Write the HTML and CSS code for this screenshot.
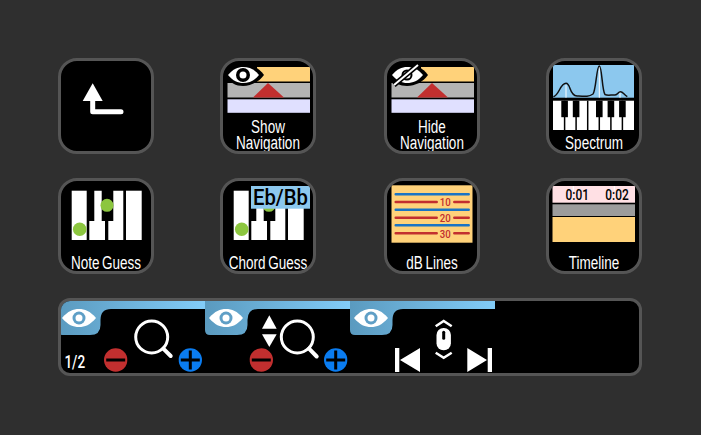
FILE: index.html
```html
<!DOCTYPE html>
<html lang="en">
  <head>
    <meta charset="UTF-8" />
    <meta name="viewport" content="width=device-width, initial-scale=1.0" />
    <title>Display Options</title>
    <link rel="stylesheet" href="styles.css">
  </head>
  <body>
    <svg class="defs" width="0" height="0">
      <defs>
        <linearGradient id="tab-fill" gradientUnits="userSpaceOnUse" x1="0" y1="0" x2="145" y2="0">
          <stop offset="0" stop-color="#5a9abf" />
          <stop offset="1" stop-color="#82ccf8" />
        </linearGradient>
        <symbol id="tab" viewBox="0 0 147 72" width="147" height="72">
          <path class="tab-fill" d="M0 0H147V8H53Q42.500 8 42.500 19V24Q42.500 34 32 34H5Q0 34 0 29Z" />
          <path class="white" d="M4 17C10 10 15 8 21 8C27 8 32 10 38 17C32 24 27 26 21 26C15 26 10 24 4 17Z" />
          <circle class="tab-ring" cx="21" cy="17" r="6.500" />
          <circle class="white" cx="21" cy="17" r="3.500" />
        </symbol>
        <symbol id="minus" viewBox="0 0 24 24" width="24" height="24">
          <circle class="red" cx="12" cy="12" r="11.700" />
          <rect class="black" x="2.500" y="10.500" width="19" height="3" />
        </symbol>
        <symbol id="plus" viewBox="0 0 24 24" width="24" height="24">
          <circle class="blue" cx="12" cy="12" r="11.700" />
          <rect class="black" x="2.500" y="10.500" width="19" height="3" />
          <rect class="black" x="10.500" y="2.500" width="3" height="19" />
        </symbol>
        <symbol id="nav-bands" viewBox="0 0 90 56" width="90" height="56">
          <rect class="yellow" x="34" y="6" width="53" height="14.500" />
          <rect class="gray" x="4.500" y="22" width="82.500" height="14.500" />
          <rect class="lilac" x="4.500" y="38.300" width="82.500" height="13.500" />
          <path class="red" d="M45 22L30 36.500H61Z" />
        </symbol>
        <symbol id="blob" viewBox="0 0 90 30" width="90" height="30">
          <path class="black" d="M1 14C7 6 13 3 20 3C28 3 36 7 41 14C36 21 28 25 20 25C13 25 7 22 1 14Z" />
        </symbol>
        <symbol id="keys" viewBox="0 0 90 64" width="90" height="64">
          <rect class="white" x="10.700" y="9.700" width="15" height="49.300" />
          <path class="white" d="M33.300 9.700H40.700V40H44V59H28.300V40H33.300Z" />
          <path class="white" d="M52.300 9.700H62.300V59H47.300V40H52.300Z" />
          <rect class="white" x="65" y="9.700" width="15.700" height="49.300" />
        </symbol>
      </defs>
    </svg>

    <main class="grid">
      <button class="btn">
        <svg width="90" height="90" viewBox="0 0 90 90">
          <path class="white" d="M31.700 22.300L41.700 40H21.700Z" />
          <path class="line-white" d="M31.700 36V50.700H60" />
        </svg>
      </button>

      <button class="btn">
        <svg width="90" height="56" viewBox="0 0 90 56">
          <use href="#nav-bands" />
          <use href="#blob" />
          <path class="white" d="M5 14C10 8 15 6 20 6C26 6 31 8 36 14C31 20 26 22 20 22C15 22 10 20 5 14Z" />
          <circle class="black" cx="20" cy="14" r="7" />
          <circle class="white" cx="20" cy="14" r="3.500" />
        </svg>
        <span class="label">Show<br />Navigation</span>
      </button>

      <button class="btn">
        <svg width="90" height="56" viewBox="0 0 90 56">
          <use href="#nav-bands" />
          <use href="#blob" />
          <path class="white" d="M5 14C10 8 15 6 20 6C26 6 31 8 36 14C31 20 26 22 20 22C15 22 10 20 5 14Z" />
          <circle class="line-pupil" cx="20" cy="14" r="4.500" />
          <path class="line-black" d="M7 24L31 4" />
          <path class="line-white-thin" d="M7 24L31 4" />
        </svg>
        <span class="label">Hide<br />Navigation</span>
      </button>

      <button class="btn">
        <svg width="90" height="74" viewBox="0 0 90 74">
          <rect class="sky" x="4" y="4" width="81" height="32.700" />
          <path class="line-thin-white" d="M17 24V36.700M50.300 6V36.700M71 31V36.700" />
          <path class="line-curve" d="M4.300 35.700C10 35 11 22.300 17 22.300C22 22.300 20 34.500 28 35C36 35.500 40 36 44 33C47 30 47.500 5 50.300 5C53 5 53 30 56 33.500C59 35 63 33.500 66 34C69 33.500 69 30.700 71.500 30.700C74 30.700 75 34 78.300 35.700" />
          <rect class="white" x="4" y="39.700" width="81" height="29.300" />
          <path class="line-key" d="M15.600 39.700V69M27.100 39.700V69M38.700 39.700V69M50.300 39.700V69M61.900 39.700V69M73.400 39.700V69" />
          <rect class="black" x="12.300" y="39.700" width="6.600" height="16.500" />
          <rect class="black" x="23.800" y="39.700" width="6.600" height="16.500" />
          <rect class="black" x="47" y="39.700" width="6.600" height="16.500" />
          <rect class="black" x="58.600" y="39.700" width="6.600" height="16.500" />
          <rect class="black" x="70.100" y="39.700" width="6.600" height="16.500" />
        </svg>
        <span class="label">Spectrum</span>
      </button>

      <button class="btn">
        <svg width="90" height="64" viewBox="0 0 90 64">
          <use href="#keys" />
          <circle class="green" cx="18.700" cy="48.300" r="6.800" />
          <circle class="green" cx="46" cy="24.300" r="6.500" />
        </svg>
        <span class="label">Note Guess</span>
      </button>

      <button class="btn">
        <svg width="90" height="64" viewBox="0 0 90 64">
          <use href="#keys" />
          <circle class="green" cx="18.700" cy="48.300" r="6.800" />
          <circle class="green" cx="46" cy="24.300" r="6.500" />
          <rect class="sky" x="28" y="5" width="59" height="22.700" />
          <text class="chord" x="57.500" y="24" textLength="55" lengthAdjust="spacingAndGlyphs">Eb/Bb</text>
        </svg>
        <span class="label">Chord Guess</span>
      </button>

      <button class="btn">
        <svg width="90" height="64" viewBox="0 0 90 64">
          <rect class="yellow" x="4.500" y="4.300" width="81" height="57.400" />
          <path class="line-blue" d="M8.700 13.300H81.700M8.700 28.700H81.700M8.700 44.300H81.700" />
          <path class="line-red" d="M8.700 21H49.700M67.300 21H81.700M8.700 36.700H49.700M67.300 36.700H81.700M8.700 52.300H49.700M67.300 52.300H81.700" />
          <text class="db" x="58.300" y="25" textLength="11" lengthAdjust="spacingAndGlyphs">10</text>
          <text class="db" x="58.300" y="40.700" textLength="11" lengthAdjust="spacingAndGlyphs">20</text>
          <text class="db" x="58.300" y="56.700" textLength="11" lengthAdjust="spacingAndGlyphs">30</text>
        </svg>
        <span class="label">dB Lines</span>
      </button>

      <button class="btn">
        <svg width="90" height="64" viewBox="0 0 90 64">
          <rect class="pink" x="3.500" y="5" width="82.500" height="16.700" />
          <rect class="gray-dark" x="3.500" y="23.300" width="82.500" height="11.700" />
          <rect class="yellow" x="3.500" y="36" width="82.500" height="25" />
          <path class="line-thin-white" d="M24.300 5V10M65.300 5V10" />
          <text class="time" x="28.300" y="18.500" textLength="23.500" lengthAdjust="spacingAndGlyphs">0:01</text>
          <text class="time" x="68" y="18.500" textLength="23.500" lengthAdjust="spacingAndGlyphs">0:02</text>
        </svg>
        <span class="label">Timeline</span>
      </button>
    </main>

    <section class="panel">
      <div class="page">
        <svg width="144" height="72" viewBox="3 0 144 72">
          <use href="#tab" />
          <circle class="line-ring" cx="93.700" cy="36" r="16" />
          <path class="line-handle" d="M105.300 47.700L112.700 55" />
          <use href="#minus" x="45.700" y="47" />
          <use href="#plus" x="120.300" y="47" />
        </svg>
        <span class="page-no">1/2</span>
      </div>
      <svg width="145" height="72" viewBox="0 0 145 72">
        <use href="#tab" />
        <path class="white" d="M64.300 14.300L71.700 27.700H57Z" />
        <path class="white" d="M57 33.300H71.700L64.300 46Z" />
        <circle class="line-ring" cx="92.300" cy="36" r="16" />
        <path class="line-handle" d="M104 47.700L111.700 55.500" />
        <use href="#minus" x="44.300" y="47" />
        <use href="#plus" x="118.700" y="47" />
      </svg>
      <svg width="145" height="72" viewBox="0 0 145 72">
        <use href="#tab" />
        <path class="white" d="M45 47H49.300V71H45ZM50 59L70 47V71Z" />
        <path class="white" d="M137.700 47H142V71H137.700ZM137 59L117.300 47V71Z" />
        <path class="line-chevron" d="M85.700 25.300L93.700 20L101.700 25.300M85.700 51.700L93.700 56.700L101.700 51.700" />
        <rect class="white" x="86.500" y="27" width="14.400" height="22.300" rx="7" />
        <rect class="black" x="92.200" y="29.800" width="3" height="9" rx="1.500" />
      </svg>
    </section>
  </body>
</html>
```

FILE: styles.css
```css
:root {
  --background-color: #2f2f2f;
  --border-color: #555555;
}

* {
  margin: 0;
  padding: 0;
  box-sizing: border-box;
}

body {
  width: 701px;
  height: 435px;
  padding: 58px 59px 59px 58px;
  background-color: var(--background-color);
  font-family: "Roboto", "Liberation Sans", sans-serif;
  overflow: hidden;
}

.defs {
  position: absolute;
}

.grid {
  display: grid;
  grid-template-columns: 162px 164px 162px 96px;
  row-gap: 24px;
  margin-bottom: 24px;
}

.btn {
  display: flex;
  flex-direction: column;
  width: 96px;
  height: 96px;
  background-color: #000;
  border: 3px solid var(--border-color);
  border-radius: 19px;
  overflow: hidden;
}

.btn svg {
  display: block;
  flex: none;
}

.label {
  display: block;
  width: 120px;
  margin: auto -15px 0;
  color: #fff;
  font-size: 18px;
  font-weight: 500;
  line-height: 16px;
  text-align: center;
  white-space: nowrap;
  word-spacing: -1.500px;
  transform: scaleX(0.75);
}

.panel {
  display: grid;
  grid-template-columns: 144px 145px 145px 1fr;
  width: 584px;
  height: 78px;
  background-color: #000;
  border: 3px solid var(--border-color);
  border-radius: 12px;
  overflow: hidden;
}

.panel svg {
  display: block;
}

.page {
  position: relative;
}

.page-no {
  position: absolute;
  left: 0;
  top: 52px;
  color: #fff;
  font-size: 18px;
  font-weight: 500;
  line-height: 18px;
  transform: scaleX(0.75);
}

/* svg fills */
.white { fill: #fff; }
.black { fill: #000; }
.red { fill: #c22f2f; }
.blue { fill: #0a7cf0; }
.green { fill: #8cc63f; }
.yellow { fill: #ffd27a; }
.gray { fill: #b4b4b4; }
.gray-dark { fill: #9c9c9c; }
.lilac { fill: #e0e0ff; }
.pink { fill: #ffe0e4; }
.sky { fill: #8cc8ee; }
.tab-fill { fill: url(#tab-fill); }
.tab-ring { fill: #5f9fc6; }

/* svg strokes */
.line-white,
.line-white-thin,
.line-black,
.line-pupil,
.line-ring,
.line-handle,
.line-chevron,
.line-curve,
.line-thin-white,
.line-key,
.line-blue,
.line-red {
  fill: none;
}

.line-white {
  stroke: #fff;
  stroke-width: 5;
  stroke-linecap: round;
  stroke-linejoin: round;
}

.line-white-thin {
  stroke: #fff;
  stroke-width: 2;
}

.line-black {
  stroke: #000;
  stroke-width: 5;
}

.line-pupil {
  stroke: #000;
  stroke-width: 2;
}

.line-ring {
  stroke: #fff;
  stroke-width: 3;
}

.line-handle {
  stroke: #fff;
  stroke-width: 4;
  stroke-linecap: round;
}

.line-chevron {
  stroke: #fff;
  stroke-width: 2.500;
}

.line-curve {
  stroke: #111;
  stroke-width: 1.500;
}

.line-thin-white {
  stroke: #fff;
  stroke-width: 1;
}

.line-key {
  stroke: #000;
  stroke-width: 1.500;
}

.line-blue {
  stroke: #1a74c4;
  stroke-width: 2.500;
  stroke-linecap: round;
}

.line-red {
  stroke: #c22f2f;
  stroke-width: 2.500;
  stroke-linecap: round;
}

.chord,
.db,
.time {
  font-family: "Roboto", "Liberation Sans", sans-serif;
  font-weight: 500;
  text-anchor: middle;
}

.chord {
  fill: #000;
  font-size: 21.500px;
}

.db {
  fill: #c22f2f;
  font-size: 11.500px;
}

.time {
  fill: #000;
  font-size: 15.500px;
}
```
